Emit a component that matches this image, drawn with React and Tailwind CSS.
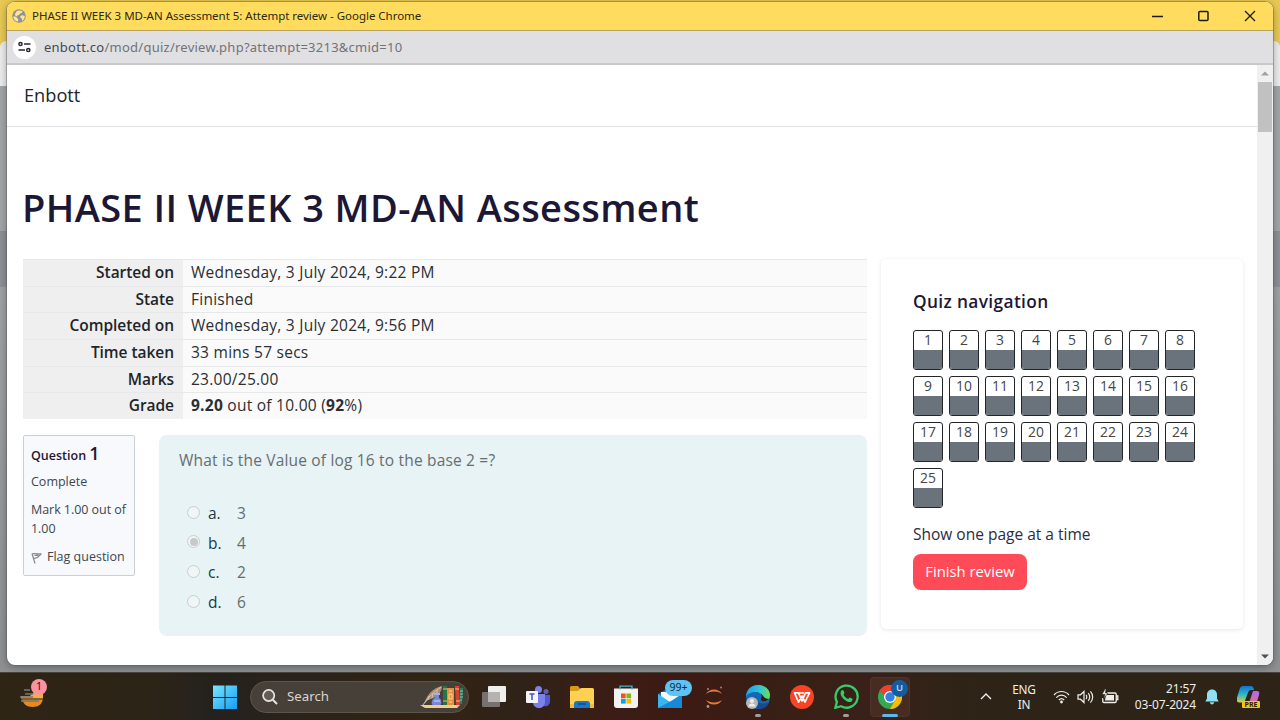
import React from "react";

const attempt = [
  ["Started on", "Wednesday, 3 July 2024, 9:22 PM"],
  ["State", "Finished"],
  ["Completed on", "Wednesday, 3 July 2024, 9:56 PM"],
  ["Time taken", "33 mins 57 secs"],
  ["Marks", "23.00/25.00"],
  ["Grade", <><b className="font-bold">9.20</b> out of 10.00 (<b className="font-bold">92</b>%)</>],
];

const answers = [
  ["a.", "3", false],
  ["b.", "4", true],
  ["c.", "2", false],
  ["d.", "6", false],
];

function TitleBar() {
  return (
    <div className="flex h-[29px] shrink-0 items-center border-b border-[#b8a35c] bg-[#ffdc5d] pl-[5px] font-['Noto_Sans','Open_Sans',sans-serif]">
      <svg width="14" height="14" viewBox="0 0 14 14">
        <circle cx="7" cy="7" r="6.8" fill="#8d9499" />
        <path d="M1.2 7.6c1.4-.3 2.900 0 3.400.8.5.9 1.500 1 1.700 1.800.2.9-.6 1.600-.4 2.600A6 6 0 0 1 1.200 7.600zM4.400 2.500C6 1.200 9 1.100 10.600 2.600l-1 1.500-1.700.3-.8 1.500-2 .6.2 1-1.600-.6-.8-1.500zM8.300 7l2-.8 2.500.8c0 2.200-1.100 4-2.700 4.900l-.3-2.400-1.500-1z" fill="#ffe694" />
      </svg>
      <span className="ml-[6px] grow whitespace-nowrap text-[11.5px] tracking-[-0.02px] text-[#2e2810]">
        PHASE II WEEK 3 MD-AN Assessment 5: Attempt review - Google Chrome
      </span>
      <div className="flex items-center gap-[35px] pr-[17px]">
        <svg width="11" height="12" viewBox="0 0 11 12"><path d="M0 6.500h11" stroke="#201b06" strokeWidth="1.300" /></svg>
        <svg width="11" height="12" viewBox="0 0 11 12"><rect x=".8" y="1.500" width="9.200" height="9" rx="1" fill="none" stroke="#201b06" strokeWidth="1.500" /></svg>
        <svg width="12" height="12" viewBox="0 0 12 12"><path d="M1 1l10 10M11 1L1 11" stroke="#201b06" strokeWidth="1.300" /></svg>
      </div>
    </div>
  );
}

function AddressBar() {
  return (
    <div className="flex h-[34px] shrink-0 items-center border-b-2 border-[#c7c8ca] bg-[#e0e0e2] pl-[6px] font-['Noto_Sans','Open_Sans',sans-serif]">
      <span className="flex size-[23px] items-center justify-center rounded-full bg-white">
        <svg width="13" height="12" viewBox="0 0 13 12" fill="none" stroke="#26282b" strokeWidth="1.500">
          <circle cx="2.500" cy="3" r="1.600" /><path d="M6 3h6.500M.5 9h6.500" /><circle cx="10.300" cy="9" r="1.600" />
        </svg>
      </span>
      <span className="ml-[8px] mt-px whitespace-nowrap text-[13px] tracking-[0.25px] text-[#717377]">
        <span className="text-[#46484b]">enbott.co</span>/mod/quiz/review.php?attempt=3213&amp;cmid=10
      </span>
    </div>
  );
}

function AttemptSummary() {
  return (
    <div className="flex flex-col bg-[#fafafa] text-[15.5px] text-[#2b2f33]">
      {attempt.map(([label, value]) => (
        <div key={label} className="flex h-[26.67px] border-t border-[#e6e8ea]">
          <div className="w-[160px] bg-[#efefef] pr-[9px] text-right leading-[25px] font-semibold tracking-[-0.05px] text-[#212529]">{label}</div>
          <div className="pl-[8px] leading-[25px] tracking-[0.26px]">{value}</div>
        </div>
      ))}
    </div>
  );
}

function QuestionInfo() {
  return (
    <div className="h-[141px] w-[112px] shrink-0 border border-[#cad0d7] rounded-[2px] bg-[#f8f9fd] pl-[7px] text-[12.5px] text-[#40464c] whitespace-nowrap">
      <div className="mt-[5px] h-[25px] font-semibold leading-[25px] text-[#1d1736]">
        Question <span className="text-[18px]">1</span>
      </div>
      <div className="mt-[6px] leading-[19px]">Complete</div>
      <div className="mt-[9px] leading-[19px] tracking-[-0.05px]">Mark 1.00 out of<br />1.00</div>
      <div className="mt-[9px] flex items-center leading-[19px]">
        <svg className="mt-[3px]" width="12" height="12" viewBox="0 0 12 12" fill="none" stroke="#858a90" strokeWidth="1.200">
          <path d="M1 1.500L4 11.500M1.200 1.800C4 .8 6 2.700 10.300 1.700 8.500 3.200 8.300 5.500 3 6.700M3.500 3.300l4-.2" />
        </svg>
        <span className="ml-[4px]">Flag question</span>
      </div>
    </div>
  );
}

function QuestionBody() {
  return (
    <div className="ml-[24px] h-[201px] grow rounded-[8px] bg-[#e7f3f5] pl-[20px] text-[15.5px] text-[#666e70]">
      <div className="mt-[13px] leading-[24px] tracking-[0.18px]">What is the Value of log 16 to the base 2 =?</div>
      <div className="mt-[27px] flex flex-col">
        {answers.map(([letter, text, checked]) => (
          <div key={letter} className="flex h-[29.6px] items-center pl-[8px]">
            <span className="mb-[3px] flex size-[13px] items-center justify-center rounded-full border border-[#c9cdcf] bg-[#f0f5f6]">
              {checked && <span className="size-[8px] rounded-full bg-[#c9c9cb]" />}
            </span>
            <span className="ml-[8px] w-[29px] text-[#173b47]">{letter}</span>
            <span>{text}</span>
          </div>
        ))}
      </div>
    </div>
  );
}

function QuizNavigation() {
  return (
    <div className="ml-[14px] h-[370px] w-[362px] rounded-[5px] bg-white pl-[32px] shadow-[0_1px_4px_rgba(0,0,0,0.1)]">
      <h2 className="pt-[31px] text-[17.3px] font-semibold leading-[24px] tracking-[0.37px] text-[#1d1736]">Quiz navigation</h2>
      <div className="mt-[16px] grid w-[282px] grid-cols-8 gap-[6px]">
        {Array.from({ length: 25 }, (_, i) => (
          <div key={i} className="flex h-[40px] w-[30px] flex-col overflow-hidden rounded-[3px] border border-[#212529] bg-white">
            <div className="h-[19px] text-center text-[13.900px] leading-[18px] text-[#40464c]">{i + 1}</div>
            <div className="grow bg-[#6a737b]" />
          </div>
        ))}
      </div>
      <div className="mt-[14px] text-[15.5px] leading-[24px] text-[#2b2c43]">Show one page at a time</div>
      <button className="mt-[8px] flex h-[36px] w-[114px] items-center justify-center rounded-[8px] bg-[#ff4b58] pb-px text-[14.8px] text-white">Finish review</button>
    </div>
  );
}

function Scrollbar() {
  return (
    <div className="flex w-[16px] shrink-0 flex-col items-center bg-[#f0f0f0]">
      <svg className="mt-[6px]" width="8" height="5" viewBox="0 0 8 5"><path d="M0 4.500L4 .5l4 4z" fill="#a0a0a0" /></svg>
      <div className="mt-[6px] h-[50px] w-[14px] bg-[#c1c1c1]" />
      <svg className="mb-[6px] mt-auto" width="8" height="5" viewBox="0 0 8 5"><path d="M0 .5h8l-4 4z" fill="#505050" /></svg>
    </div>
  );
}

function BrowserWindow() {
  return (
    <div className="absolute left-[7px] top-[2px] flex h-[663px] w-[1266px] flex-col overflow-hidden rounded-[8px] bg-white shadow-[0_0_0_1px_rgba(90,90,90,0.4),0_2px_8px_rgba(0,0,0,0.35)]">
      <TitleBar />
      <AddressBar />
      <div className="flex min-h-0 grow font-['Open_Sans','Noto_Sans',sans-serif]">
        <main className="flex w-[1250px] flex-col">
          <header className="h-[62px] border-b border-[#dee2e6] pl-[17px] text-[18.2px] leading-[60px] text-[#212529]">Enbott</header>
          <h1 className="ml-[15px] mt-[55px] whitespace-nowrap text-[38px] font-semibold leading-[50px] tracking-[0.4px] text-[#1d1736]">PHASE II WEEK 3 MD-AN Assessment</h1>
          <div className="mt-[27px] flex pl-[16px]">
            <div className="w-[844px]">
              <AttemptSummary />
              <div className="mt-[16px] flex">
                <QuestionInfo />
                <QuestionBody />
              </div>
            </div>
            <QuizNavigation />
          </div>
        </main>
        <Scrollbar />
      </div>
    </div>
  );
}

function Cell({ children, active, running }) {
  return (
    <div className={active ? "relative flex h-[40px] w-[40px] mx-[2px] items-center justify-center rounded-[4px] border border-[#4d352b] bg-[#472c22]" : "relative flex h-[40px] w-[44px] items-center justify-center"}>
      {children}
      {running && <span className={active ? "absolute bottom-[-1px] h-[3px] w-[16px] rounded-full bg-[#5cb8ee]" : "absolute bottom-0 h-[3px] w-[6px] rounded-full bg-[#a79b95]"} />}
    </div>
  );
}

function WidgetButton() {
  return (
    <div className="relative ml-[20px] mb-[3px] w-[30px]">
      <svg width="28" height="32" viewBox="0 0 28 32">
        <path d="M1 18h22c0 7-4.500 10-10.500 10S3 25 1 18z" fill="#e78a20" />
        <path d="M12 15l4-2 7-1v7H1v-2h9z" fill="#f0b23f" />
        <path d="M4 11h6M5 15h8M0 18h13M1 22h18" stroke="#777774" strokeWidth="1.700" />
        <path d="M2 20h21" stroke="#5c4632" strokeWidth="1.300" />
      </svg>
      <span className="absolute left-[11px] top-0 flex size-[16px] items-center justify-center rounded-full bg-[#fb929f] text-[10.5px] text-[#2b1518]">1</span>
    </div>
  );
}

function SearchBox() {
  return (
    <div className="ml-[13px] flex h-[32px] w-[219px] items-center rounded-full border border-[#5c554a] bg-[#474038] pl-[11px]">
      <svg width="16" height="16" viewBox="0 0 16 16" fill="none" stroke="#e6e4e1" strokeWidth="1.700"><circle cx="6.700" cy="6.500" r="5.600" fill="#625c54" /><path d="M10.800 10.800L15 15" strokeWidth="2" /></svg>
      <span className="ml-[9px] grow text-[13.300px] text-[#d9d6d1]">Search</span>
      <svg className="mr-[3px]" width="46" height="26" viewBox="0 0 46 26">
        <path d="M1 21h40l-3 3H6z" fill="#f2cf86" />
        <path d="M5 20C8 10 14 4 23 2c0 6-5 12-14 14z" fill="#a8907a" />
        <path d="M4 21C9 13 15 8 22 3M10 12l-1 4M14 9l-1 5M18 6v4" stroke="#dac8b4" strokeWidth=".9" fill="none" />
        <path d="M16 10h4v4c3 1 3 7 1 7h-7c-2 0-2-6 2-7z" fill="#7987d8" /><path d="M15 9h6v2h-6zM15 16h6v2h-6z" fill="#a8b2f0" />
        <path d="M24 2h4v19h-4z" fill="#27734b" /><path d="M24 5h4M24 17h4" stroke="#e7be58" />
        <path d="M28 4h7v17h-7z" fill="#e6913c" /><path d="M30 7h3M30 10h3v5h-3zM30 18h3" stroke="#ffd58a" fill="none" />
        <path d="M36 2h4l1 19h-4z" fill="#d94032" /><path d="M36 5h4M37 17h4" stroke="#ffc56b" />
        <path d="M41 4h3l-1 16h-2z" fill="#2e7c63" /><path d="M41 7h3M41 10h3M41 13h3M41 16h2" stroke="#89c9aa" />
      </svg>
    </div>
  );
}

function AppIcons() {
  return (
    <div className="ml-[3px] flex items-center">
      <Cell>
        <svg width="24" height="24" viewBox="0 0 24 24"><rect y="7" width="18" height="15" rx="1" fill="#777270" /><rect x="6" y="1" width="18" height="16" rx="1" fill="#efefef" /><path d="M6 7h12v10H6z" fill="#b5b3b2" /></svg>
      </Cell>
      <Cell>
        <svg width="24" height="24" viewBox="0 0 24 24">
          <circle cx="20" cy="6.500" r="2.500" fill="#5961c4" /><circle cx="12.500" cy="4.500" r="3.500" fill="#7b83eb" />
          <path d="M17 10h7v6c0 4-3 6-6 5z" fill="#5059c9" /><path d="M7 9h12v8c0 4-3 6-6 6s-6-2-6-6z" fill="#7b83eb" />
          <rect y="6" width="12" height="12" rx="1" fill="#f4f4fa" />
          <path d="M3.500 9h5M6 9v6" stroke="#4b53bc" strokeWidth="1.500" />
        </svg>
      </Cell>
      <Cell>
        <svg width="24" height="24" viewBox="0 0 24 24">
          <path d="M0 2.500Q0 1 1.500 1H8l2 2.500V8H0z" fill="#d79b16" /><path d="M0 6h8l3-3h11.500Q24 3 24 4.500V23H0z" fill="#ffd152" />
          <path d="M0 19h24v4H0z" fill="#f5bd37" /><path d="M4 23v-4q0-3 3-3h10q3 0 3 3v4z" fill="#1977c7" /><path d="M8 19h8" stroke="#0a4a8e" strokeWidth="1.400" />
        </svg>
      </Cell>
      <Cell>
        <svg width="24" height="24" viewBox="0 0 24 24">
          <path d="M0 3.500h24V20q0 3-3 3H3q-3 0-3-3z" fill="#f2f2f2" /><path d="M6 4.500V1.200h12v3.300" fill="none" stroke="#42b7c9" strokeWidth="1.300" />
          <path d="M7 8.500h4.700v4.700H7z" fill="#f25022" /><path d="M12.400 8.500h4.700v4.700h-4.700z" fill="#7fba00" /><path d="M7 13.900h4.700v4.700H7z" fill="#00a4ef" /><path d="M12.400 13.900h4.700v4.700h-4.700z" fill="#ffb900" />
        </svg>
      </Cell>
      <Cell>
        <svg width="24" height="24" viewBox="0 0 24 24"><path d="M0 9l12-7 12 7v14H0z" fill="#1672bd" /><path d="M3 7h18v6l-9 5-9-5z" fill="#f2f8fc" /><path d="M0 9l12 8L24 9v14H0z" fill="#38b6f0" /><path d="M0 23l15-8 9-6v14z" fill="#1689d8" /></svg>
        <span className="absolute left-[17px] top-[3px] flex h-[16px] w-[27px] items-center justify-center rounded-full bg-[#5dc3f5] text-[10.500px] text-[#112a3a]">99+</span>
      </Cell>
      <Cell>
        <svg width="24" height="24" viewBox="0 0 24 24"><path d="M4 9c3-6 13-6 16 0-4-3.300-12-3.300-16 0zM4 15c3 6 13 6 16 0-4 3.300-12 3.300-16 0z" fill="#e77838" /><circle cx="6" cy="4" r="1" fill="#9b8c84" /><circle cx="19" cy="2.500" r="1" fill="#918782" /><circle cx="6" cy="21.500" r="1.400" fill="#a59b95" /></svg>
      </Cell>
      <Cell running>
        <svg width="24" height="24" viewBox="0 0 24 24">
          <defs><linearGradient id="edgeTop" x1="0" x2="1"><stop stopColor="#239fe0" /><stop offset=".55" stopColor="#2fc4da" /><stop offset="1" stopColor="#6bdc55" /></linearGradient></defs>
          <circle cx="12" cy="12" r="12" fill="#1568b7" />
          <path d="M0 12C0 4 6 0 12 0c7 0 12 5 12 10 0 4-3 6-6 6s-4-1-3-3c1-3-1-6-5-6-5 0-9 2-10 5z" fill="url(#edgeTop)" />
          <path d="M10 10c-2 5 2 10 11 8l2 0c-2 4-6 6-10 6-6 0-7-9-3-14z" fill="#174c91" />
          <path d="M15 13c1-2 0-4-1-5 4 2 2 5 9 6-2 2-4 2.500-6 2.200-2-.2-3-1.500-2-3.200z" fill="#331e17" />
          <circle cx="6" cy="18" r="6" fill="#b9b7b5" /><circle cx="6" cy="16" r="2.100" fill="#efeeec" /><path d="M2.500 21.500c0-4 7-4 7 0z" fill="#efeeec" />
        </svg>
      </Cell>
      <Cell>
        <svg width="24" height="24" viewBox="0 0 24 24"><circle cx="12" cy="12" r="12" fill="#f94325" /><path d="M4.500 7.800h4L12 16l3.500-8.200h4L15 17l-3-6-3.500 6z" fill="none" stroke="#fff" strokeWidth="1.700" strokeLinejoin="round" /><path d="M9 8h5" stroke="#fff" strokeWidth="1.500" /></svg>
      </Cell>
      <Cell running>
        <svg width="25" height="25" viewBox="0 0 24 24"><path d="M1.300 22.800l1.500-5.600a10.600 10.600 0 1 1 4 4.100z" fill="none" stroke="#35cc69" strokeWidth="2.200" /><path d="M7.200 6.200c.8-.8 1.600-.6 2 .3l.8 2c.2.600-.9 1.500-.8 1.800 1 2 2.400 3.300 4.300 4 .5 0 1.300-1.500 1.800-1.300l2.300 1.100c.5.300-.1 2.100-.8 2.700-1.600 1.200-4.500.3-7-2-2.700-2.500-4.700-6-2.600-8.600z" fill="#35cc69" /></svg>
      </Cell>
      <Cell active running>
        <svg width="24" height="24" viewBox="0 0 24 24">
          <circle cx="12" cy="12" r="12" fill="#34a853" /><path d="M12 12L1.600 6A12 12 0 0 1 22.400 6z" fill="#e94235" /><path d="M12 6h10.400A12 12 0 0 1 12 24l5.200-9z" fill="#fbbc04" /><path d="M1.600 6A12 12 0 0 1 12 0v6l-6 4z" fill="#e94235" />
          <circle cx="12" cy="12" r="6" fill="#fff" /><circle cx="12" cy="12" r="4.700" fill="#347ee8" />
        </svg>
        <span className="absolute right-[1px] top-[2px] flex size-[17px] items-center justify-center rounded-full bg-[#125ca0] text-[9.500px] font-semibold text-[#bcd5ea]">U</span>
      </Cell>
    </div>
  );
}

function Tray() {
  return (
    <div className="ml-auto flex items-center text-[12px] leading-[15px] text-[#f0eeea]">
      <svg width="12" height="7" viewBox="0 0 12 7" fill="none" stroke="currentColor" strokeWidth="1.400"><path d="M1 6l5-5 5 5" /></svg>
      <div className="ml-[20px] w-[24px] text-center text-[11.800px] leading-[15px] tracking-[-0.2px]">ENG<br />IN</div>
      <svg className="ml-[17px]" width="17" height="14" viewBox="0 0 17 14" fill="none" stroke="currentColor" strokeWidth="1.200"><path d="M1 5c4-4.700 11-4.700 15 0M3.300 7.700c3-3.400 7.400-3.400 10.400 0M5.800 10c1.800-1.800 3.600-1.800 5.400 0" /><circle cx="8.500" cy="12" r="1.400" fill="currentColor" stroke="none" /></svg>
      <svg className="ml-[7px]" width="17" height="14" viewBox="0 0 17 14" fill="none" stroke="currentColor" strokeWidth="1.200"><path d="M1 4.800h2.500L7 1.500v11L3.500 9.200H1zM9 5c1 1 1 3 0 4M11.200 3.200c2 2 2 5.600 0 7.600M13.400 1.300c3 3 3 8.400 0 11.400" /></svg>
      <svg className="ml-[7px]" width="18" height="15" viewBox="0 0 18 15" fill="none" stroke="currentColor" strokeWidth="1.300"><path d="M6 4h8q1.200 0 1.200 1.200v7.100q0 1.200-1.200 1.200H3q-1.200 0-1.200-1.200V9M15.500 7h1.300v3.500h-1.300" /><path d="M5 6h8v5.500H4z" fill="currentColor" stroke="none" /><path d="M4 0L1 5.500h3L2.500 10 7 4H4.500L5 0" fill="currentColor" stroke="#2c2417" strokeWidth=".6" /></svg>
      <div className="ml-[15px] w-[62px] whitespace-nowrap text-right text-[12px] leading-[16px] tracking-[-0.15px]">21:57<br />03-07-2024</div>
      <svg className="ml-[9px]" width="14" height="16" viewBox="0 0 14 16" fill="#8fe0f4"><path d="M7 .5c3 0 5 2.200 5 5v4l1.700 3H.3l1.700-3v-4c0-2.800 2-5 5-5zM4.800 13.300h4.400c-.4 2.800-4 2.800-4.400 0z" /></svg>
      <div className="relative ml-[18px] mr-[19px] h-[24px] w-[24px]">
        <svg width="24" height="24" viewBox="0 0 24 24">
          <defs>
            <linearGradient id="cpA" x2="0" y2="1"><stop stopColor="#176fd6" /><stop offset=".5" stopColor="#28b8c8" /><stop offset="1" stopColor="#e3cb46" /></linearGradient>
            <linearGradient id="cpB" x2="0" y2="1"><stop stopColor="#a96cf2" /><stop offset="1" stopColor="#f6697a" /></linearGradient>
          </defs>
          <path d="M6 1h8q2 0 2.500 2l.5 2h-3q-2 0-2.700 2L8 15.500q-.7 2-2.500 2H2.500Q-1 17.500-.2 13L2.700 4Q3.500 1 6 1z" fill="url(#cpA)" />
          <path d="M16 6h4q3 0 2 4l-2.500 8q-.8 3-3 3H9q2 0 2.700-2z" fill="url(#cpB)" />
        </svg>
        <span className="absolute bottom-px left-[5px] flex h-[7px] w-[18px] items-center justify-center rounded-[1px] bg-[#fbc21a] text-[7px] font-bold leading-[7px] text-[#241c06]">PRE</span>
      </div>
    </div>
  );
}

function Taskbar() {
  return (
    <div className="flex h-[48px] shrink-0 items-center border-t border-[#49443d] bg-[linear-gradient(90deg,#2f2515_0px,#2c2417_150px,#24211e_215px,#2a231a_300px,#322414_430px,#2f2218_520px,#3b1d15_610px,#3d1a14_680px,#382016_780px,#38211a_880px,#2d2417_980px,#2d2417_1280px)] font-['Noto_Sans','Open_Sans',sans-serif]">
      <WidgetButton />
      <svg className="ml-[163px]" width="24" height="24" viewBox="0 0 24 24">
        <defs><linearGradient id="win" x2="1" y2="1"><stop stopColor="#79e5ff" /><stop offset="1" stopColor="#179df2" /></linearGradient></defs>
        <path d="M0 .5h11.500V12H0zM12.500.5H24V12H12.500zM0 13h11.500v11H0zM12.500 13H24v11H12.500z" fill="url(#win)" />
      </svg>
      <SearchBox />
      <AppIcons />
      <Tray />
    </div>
  );
}

export default function App() {
  return (
    <div className="relative flex h-[720px] w-[1280px] flex-col overflow-hidden bg-[#929598]">
      <div className="flex h-[52px] shrink-0 flex-col justify-end bg-[#e8c953]">
        <div className="h-[11px] rounded-t-[6px] bg-[#ededed]" />
      </div>
      <div className="h-[34px] shrink-0 bg-[#ededed]" />
      <div className="h-[145px] shrink-0 bg-[#a3a6a9]" />
      <div className="h-[56px] shrink-0 bg-[#8d9195]" />
      <div className="grow bg-[linear-gradient(180deg,#a0a3a6,#8e9092)]" />
      <BrowserWindow />
      <Taskbar />
    </div>
  );
}
